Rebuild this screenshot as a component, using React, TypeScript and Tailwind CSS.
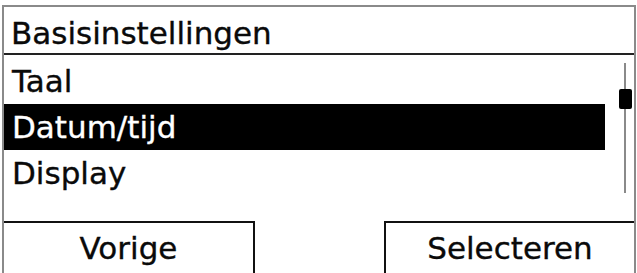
const font = { fontFamily: '"DejaVu Sans", "Liberation Sans", sans-serif' };

const items = ["Taal", "Datum/tijd", "Display"];
const selected = 1;

export default function App() {
  return (
    <div
      className="w-[637px] h-[273px] bg-white overflow-hidden pt-[5px] pl-[2px] pr-[1px] text-[#0a0a0a] [-webkit-text-stroke:0.35px_currentColor]"
      style={font}
    >
      <div className="h-[268px] border-2 border-b-0 border-[#8a8a8a] flex flex-col">
        {/* header */}
        <div className="h-[48px] border-b-2 border-[#222] pt-[3px] pl-[7px] text-[31px] leading-[46px] overflow-hidden">
          Basisinstellingen
        </div>

        {/* menu list + scrollbar */}
        <div className="flex">
          <div className="w-[601px] pt-[3px]">
            {items.map((item, i) => (
              <div
                key={item}
                className={
                  "h-[46px] pl-[8px] text-[31px] leading-[46px] " +
                  (i === selected ? "bg-black text-white" : "")
                }
              >
                {item}
              </div>
            ))}
          </div>
          <div className="pl-[19px] pt-[8px]">
            <div className="relative w-[2px] h-[130px] bg-[#8a8a8a]">
              <div className="absolute left-[-5px] top-[26px] w-[13px] h-[20px] bg-black rounded-[2px]" />
            </div>
          </div>
        </div>

        {/* soft keys */}
        <div className="mt-auto flex justify-between text-[31px] leading-[46px]">
          <div className="w-[251px] h-[52px] border-t-2 border-r-2 border-[#111] pt-[2px] text-center">
            Vorige
          </div>
          <div className="w-[250px] h-[52px] border-t-2 border-l-2 border-[#111] pt-[2px] text-center">
            Selecteren
          </div>
        </div>
      </div>
    </div>
  );
}
